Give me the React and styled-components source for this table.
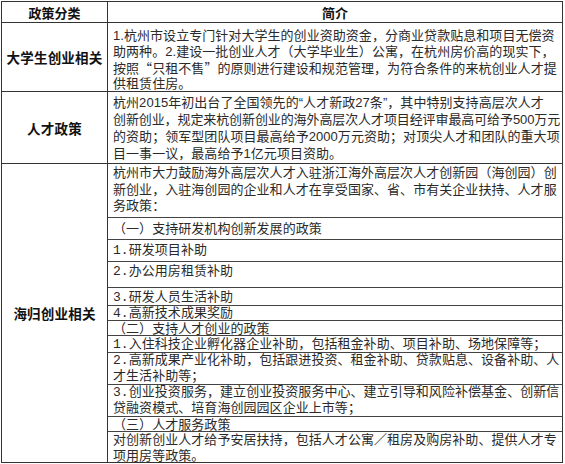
import React from "react";
import styled, { createGlobalStyle } from "styled-components";

const GlobalStyle = createGlobalStyle`
  html, body {
    margin: 0;
    padding: 0;
    background: #ffffff;
  }
`;

const BODY_FONT = `"Liberation Sans", "Noto Sans CJK SC", sans-serif`;
const MONO_FONT = `"Liberation Mono", "Noto Sans CJK SC", monospace`;

const Table = styled.div`
  margin: 1px 0 0 1px;
  width: 562px;
  display: grid;
  grid-template-columns: 106px 1fr;
  border-top: 1px solid #333;
  border-left: 1px solid #333;
  color: #2a2a2a;
  font-family: ${BODY_FONT};
  font-size: 13px;
  box-sizing: border-box;
`;

const Cell = styled.div`
  border-right: 1px solid #333;
  border-bottom: 1px solid #333;
  box-sizing: border-box;
  height: ${({ $h }) => ($h ? `${$h}px` : "auto")};
`;

const HeadCell = styled(Cell)`
  display: flex;
  align-items: center;
  justify-content: center;
  font-weight: bold;
  font-size: 13px;
  color: #111;
`;

const LabelCell = styled(Cell)`
  display: flex;
  align-items: center;
  justify-content: center;
  font-weight: bold;
  font-size: 13.5px;
  color: #111;
  letter-spacing: 0.2px;
`;

const TextCell = styled(Cell)`
  padding: ${({ $pt }) => $pt}px 0 0 5px;
`;

const Line = styled.span`
  display: block;
  white-space: nowrap;
  height: ${({ $pitch }) => $pitch}px;
  line-height: ${({ $pitch }) => $pitch}px;
  letter-spacing: ${({ $tight }) => ($tight ? "-0.1px" : "0.05px")};
`;

// full-width CJK quotation marks, as in the source table
const Quote = styled.span`
  font-family: "Noto Sans CJK SC", sans-serif;
  font-feature-settings: "fwid";
`;

const SubStack = styled(Cell)`
  display: flex;
  flex-direction: column;
  height: 299px;
`;

const SubRow = styled.div`
  height: ${({ $h }) => $h}px;
  flex: none;
  box-sizing: border-box;
  padding: ${({ $pt }) => ($pt ?? 1)}px 0 0 5px;
  border-bottom: ${({ $last }) => ($last ? "none" : "1px solid #444")};
  font-family: ${({ $mono }) => ($mono ? MONO_FONT : BODY_FONT)};
  overflow: hidden;
`;

const rows = [
  {
    label: "大学生创业相关",
    h: 69,
    pt: 5,
    pitch: 16,
    lines: [
      "1.杭州市设立专门针对大学生的创业资助资金，分商业贷款贴息和项目无偿资",
      "助两种。2.建设一批创业人才（大学毕业生）公寓，在杭州房价高的现实下，",
      <>
        按照<Quote>“</Quote>只租不售<Quote>”</Quote>的原则进行建设和规范管理，为符合条件的来杭创业人才提
      </>,
      "供租赁住房。",
    ],
  },
  {
    label: "人才政策",
    h: 72,
    pt: 2,
    pitch: 17,
    lines: [
      "杭州2015年初出台了全国领先的“人才新政27条”，其中特别支持高层次人才",
      "创新创业，规定来杭创新创业的海外高层次人才项目经评审最高可给予500万元",
      "的资助；领军型团队项目最高给予2000万元资助；对顶尖人才和团队的重大项",
      "目一事一议，最高给予1亿元项目资助。",
    ],
    tight: [1],
  },
];

const subRows = [
  {
    h: 54,
    pt: 1,
    pitch: 16.5,
    lines: [
      "杭州市大力鼓励海外高层次人才入驻浙江海外高层次人才创新园（海创园）创",
      "新创业，入驻海创园的企业和人才在享受国家、省、市有关企业扶持、人才服",
      "务政策：",
    ],
  },
  { h: 22, pt: 3, lines: ["（一）支持研发机构创新发展的政策"] },
  { h: 22, pt: 3, mono: true, lines: ["1.研发项目补助"] },
  { h: 26, pt: 2, mono: true, lines: ["2.办公用房租赁补助"] },
  { h: 18, pt: 2, mono: true, lines: ["3.研发人员生活补助"] },
  { h: 15, pt: 0, mono: true, lines: ["4.高新技术成果奖励"] },
  { h: 15, pt: 0, lines: ["（二）支持人才创业的政策"] },
  { h: 17, pt: 1, mono: true, lines: ["1.入住科技企业孵化器企业补助，包括租金补助、项目补助、场地保障等；"] },
  {
    h: 32,
    pt: 0,
    mono: true,
    lines: ["2.高新成果产业化补助，包括跟进投资、租金补助、贷款贴息、设备补助、人", "才生活补助等；"],
  },
  {
    h: 32,
    pt: 0,
    mono: true,
    lines: ["3.创业投资服务，建立创业投资服务中心、建立引导和风险补偿基金、创新信", "贷融资模式、培育海创园园区企业上市等；"],
  },
  { h: 15, pt: 0, lines: ["（三）人才服务政策"] },
  {
    h: 30,
    pt: 0,
    last: true,
    lines: ["对创新创业人才给予安居扶持，包括人才公寓／租房及购房补助、提供人才专", "项用房等政策。"],
  },
];

const App = () => {
  return (
    <>
      <GlobalStyle />
      <Table>
        <HeadCell $h={21}>政策分类</HeadCell>
        <HeadCell $h={21}>简介</HeadCell>

        {rows.map((row) => (
          <React.Fragment key={row.label}>
            <LabelCell $h={row.h}>{row.label}</LabelCell>
            <TextCell $h={row.h} $pt={row.pt}>
              {row.lines.map((l, i) => (
                <Line key={i} $pitch={row.pitch} $tight={row.tight?.includes(i)}>
                  {l}
                </Line>
              ))}
            </TextCell>
          </React.Fragment>
        ))}

        <LabelCell $h={299}>海归创业相关</LabelCell>
        <SubStack>
          {subRows.map((s, i) => (
            <SubRow key={i} $h={s.h} $pt={s.pt} $mono={s.mono} $last={s.last}>
              {s.lines.map((l) => (
                <Line key={l} $pitch={s.pitch ?? 16}>
                  {l}
                </Line>
              ))}
            </SubRow>
          ))}
        </SubStack>
      </Table>
    </>
  );
};

export default App;
